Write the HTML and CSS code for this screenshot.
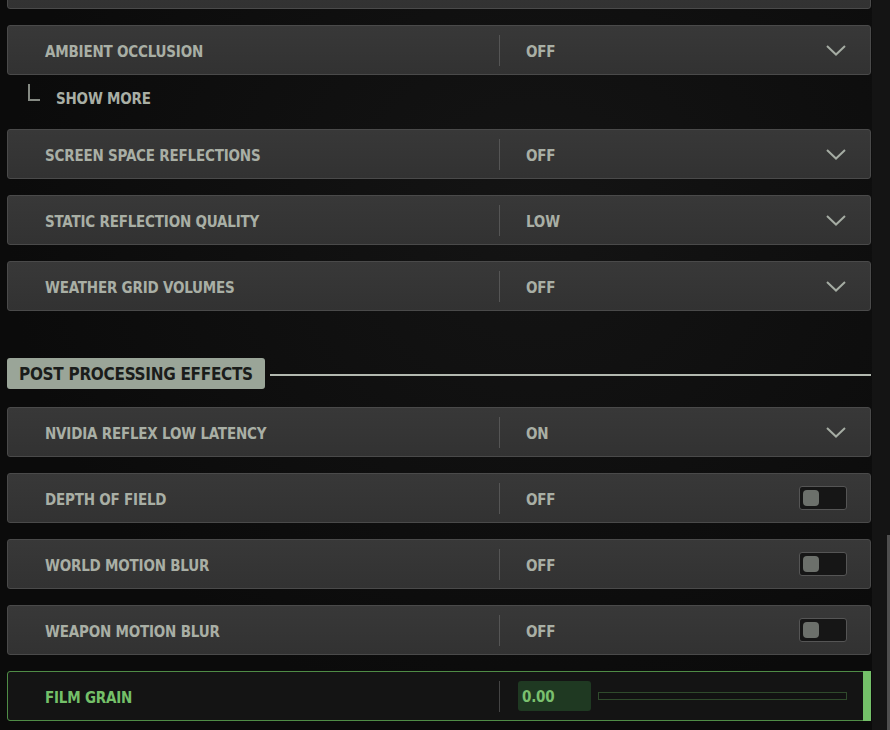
FILE: index.html
```html
<!DOCTYPE html>
<html lang="en">
<head>
  <meta charset="UTF-8" />
  <title>Graphics Settings</title>
  <link rel="stylesheet" href="styles.css">
</head>
<body>
  <div class="page">
    <div class="settings">
      <!-- previous row, scrolled mostly out of view -->
      <div class="row"></div>

      <div class="row">
        <div class="label">AMBIENT OCCLUSION</div>
        <div class="value">OFF</div>
        <svg class="chevron" viewBox="0 0 20 11"><polyline points="1,1 10,9.5 19,1" /></svg>
      </div>
      <div class="show-more">
        <span class="elbow"></span>
        <span>SHOW MORE</span>
      </div>

      <div class="row">
        <div class="label">SCREEN SPACE REFLECTIONS</div>
        <div class="value">OFF</div>
        <svg class="chevron" viewBox="0 0 20 11"><polyline points="1,1 10,9.5 19,1" /></svg>
      </div>
      <div class="row">
        <div class="label">STATIC REFLECTION QUALITY</div>
        <div class="value">LOW</div>
        <svg class="chevron" viewBox="0 0 20 11"><polyline points="1,1 10,9.5 19,1" /></svg>
      </div>
      <div class="row">
        <div class="label">WEATHER GRID VOLUMES</div>
        <div class="value">OFF</div>
        <svg class="chevron" viewBox="0 0 20 11"><polyline points="1,1 10,9.5 19,1" /></svg>
      </div>

      <div class="section-head">
        <div class="section-title">POST PROCESSING EFFECTS</div>
        <div class="section-line"></div>
      </div>

      <div class="row">
        <div class="label">NVIDIA REFLEX LOW LATENCY</div>
        <div class="value">ON</div>
        <svg class="chevron" viewBox="0 0 20 11"><polyline points="1,1 10,9.5 19,1" /></svg>
      </div>
      <div class="row">
        <div class="label">DEPTH OF FIELD</div>
        <div class="value">OFF</div>
        <div class="toggle"><span class="knob"></span></div>
      </div>
      <div class="row">
        <div class="label">WORLD MOTION BLUR</div>
        <div class="value">OFF</div>
        <div class="toggle"><span class="knob"></span></div>
      </div>
      <div class="row">
        <div class="label">WEAPON MOTION BLUR</div>
        <div class="value">OFF</div>
        <div class="toggle"><span class="knob"></span></div>
      </div>
      <div class="row active">
        <div class="label">FILM GRAIN</div>
        <div class="value">
          <span class="num-box">0.00</span>
          <span class="track"></span>
        </div>
        <span class="active-bar"></span>
      </div>
    </div>
    <div class="scroll-strip">
      <span class="thumb"></span>
    </div>
  </div>
</body>
</html>
```

FILE: styles.css
```css
body {
  margin: 0;
  background: #0c0c0c;
  font-family: "DejaVu Sans Condensed", "DejaVu Sans", sans-serif;
  font-weight: bold;
  color: #a9afa5;
  overflow: hidden;
}
.page {
  display: flex;
  height: 730px;
  background: radial-gradient(ellipse at 60% 30%, #141414 0%, #0b0b0b 70%);
}
.settings {
  width: 864px;
  margin-left: 7px;
  margin-top: -41px;
  display: flex;
  flex-direction: column;
  gap: 16px;
}
.row {
  position: relative;
  flex: none;
  height: 48px;
  display: flex;
  align-items: center;
  border: 1px solid #4a4a4a;
  border-radius: 3px;
  background: linear-gradient(#383838, #323232);
  font-size: 15px;
  letter-spacing: -0.2px;
}
.label {
  width: 454px;
  padding-left: 37px;
  height: 31px;
  line-height: 35px;
  border-right: 1px solid #555;
}
.value {
  flex: 1;
  padding-left: 26px;
  padding-top: 4px;
  display: flex;
  align-items: center;
}
.chevron {
  width: 20px;
  height: 11px;
  margin-right: 24px;
  fill: none;
  stroke: #a5aca3;
  stroke-width: 2;
}
.toggle {
  width: 43px;
  height: 22px;
  margin-right: 23px;
  border: 1px solid #555;
  border-radius: 3px;
  background: #161616;
  display: flex;
  align-items: center;
  padding-left: 3px;
}
.knob {
  width: 16px;
  height: 16px;
  border-radius: 4px;
  background: #6c706b;
}
.show-more {
  flex: none;
  display: flex;
  align-items: center;
  height: 30px;
  margin: -8px 0 0 21px;
  padding-top: 2px;
  box-sizing: border-box;
  font-size: 15px;
  letter-spacing: -0.2px;
}
.elbow {
  width: 10px;
  height: 15px;
  margin-bottom: 14px;
  margin-right: 16px;
  border-left: 2px solid #858a83;
  border-bottom: 2px solid #858a83;
}
.section-head {
  flex: none;
  display: flex;
  align-items: center;
  margin-top: 31px;
  margin-bottom: 2px;
}
.section-title {
  background: #9aa598;
  color: #1b1d1b;
  font-size: 17px;
  letter-spacing: -0.3px;
  height: 31px;
  line-height: 33px;
  padding: 0 12px;
  border-radius: 3px;
}
.section-line {
  flex: 1;
  height: 2px;
  margin: 3px 0 0 5px;
  background: #b3b9b0;
}
.row.active {
  border-color: #4f8c46;
  background: #141414;
  color: #74c069;
}
.row.active .label {
  border-right-color: #444;
}
.row.active .value {
  padding-top: 0;
}
.num-box {
  width: 69px;
  height: 30px;
  line-height: 33px;
  margin-left: -8px;
  padding-left: 4px;
  border-radius: 3px;
  background: #1f3922;
  color: #7ac06e;
  font-size: 15px;
}
.track {
  width: 247px;
  height: 6px;
  margin-left: 7px;
  border: 1px solid #2f4a2c;
  background: #121212;
}
.active-bar {
  position: absolute;
  right: -1px;
  top: -1px;
  bottom: -1px;
  width: 8px;
  background: #74c069;
}
.scroll-strip {
  flex: 1;
  margin-left: 1px;
  background: #141414;
  position: relative;
}
.thumb {
  position: absolute;
  right: 0;
  top: 535px;
  bottom: 0;
  width: 3px;
  background: #4e4e4e;
}
```
